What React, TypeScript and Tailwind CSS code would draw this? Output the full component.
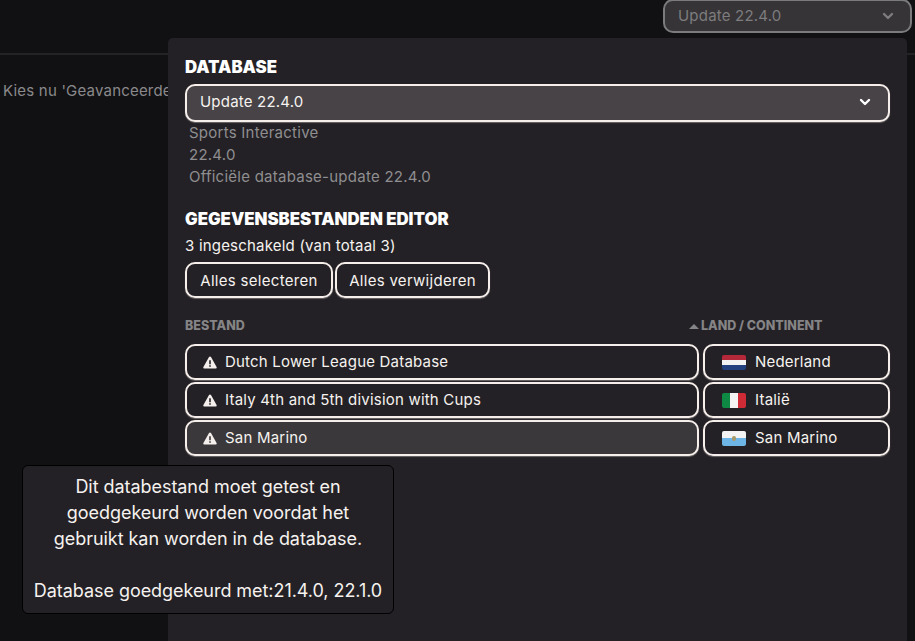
import React from 'react';

const font = { fontFamily: 'Inter, "Noto Sans", sans-serif' };

const Chevron = ({ className }: { className: string }) => (
    <svg className={className} viewBox="0 0 12 8" fill="none" stroke="currentColor" strokeWidth={2.4} strokeLinecap="round" strokeLinejoin="round">
        <path d="M2 2l4 4 4-4" />
    </svg>
);

const Warning = () => (
    <svg className="w-[14px] h-[13px] shrink-0" viewBox="0 0 14 13">
        <path fillRule="evenodd" fill="#f4efec" d="M7 0.5c.4 0 .8.2 1 .6l5.6 9.8c.4.7-.1 1.6-1 1.6H1.400c-.9 0-1.400-.9-1-1.600L6 1.100c.2-.4.6-.6 1-.6zM6.200 4.200v4h1.600v-4zM6.200 9.200v1.600h1.600V9.200z" />
    </svg>
);

const FlagNL = () => (
    <div className="w-[24px] h-[15px] rounded-[2px] overflow-hidden flex flex-col shrink-0">
        <div className="flex-1 bg-[#b5283a]" />
        <div className="flex-1 bg-[#f3f3f3]" />
        <div className="flex-1 bg-[#23407f]" />
    </div>
);

const FlagIT = () => (
    <div className="w-[24px] h-[15px] rounded-[2px] overflow-hidden flex shrink-0">
        <div className="flex-1 bg-[#0f8a45]" />
        <div className="flex-1 bg-[#f3f3f3]" />
        <div className="flex-1 bg-[#cf2b37]" />
    </div>
);

const FlagSM = () => (
    <div className="relative w-[24px] h-[15px] rounded-[2px] overflow-hidden flex flex-col shrink-0">
        <div className="flex-1 bg-[#f3f3f3]" />
        <div className="flex-1 bg-[#6db5e6]" />
        <div className="absolute left-[10px] top-[5px] w-[4px] h-[5px] rounded-full bg-[#a89a6a]" />
    </div>
);

const rows = [
    { file: 'Dutch Lower League Database', country: 'Nederland', flag: <FlagNL /> },
    { file: 'Italy 4th and 5th division with Cups', country: 'Italië', flag: <FlagIT /> },
    { file: 'San Marino', country: 'San Marino', flag: <FlagSM />, hover: true },
];

export default function App() {
    return (
        <div className="relative w-[915px] h-[641px] overflow-hidden bg-[#111113] text-[15px] tracking-[0.2px]" style={font}>
            {/* Background page */}
            <div className="h-[55px] border-b-2 border-[#232225] flex justify-end pr-[3px]">
                <div className="w-[249px] h-[34px] -mt-[1px] pl-[13px] pr-[14px] flex items-center justify-between rounded-[10px] border-2 border-[#7b7a7c] bg-[#363437] text-[#7d7c7e]">
                    <span>Update 22.4.0</span>
                    <Chevron className="w-[12px] h-[8px] mr-[2px]" />
                </div>
            </div>
            <div className="pl-[3px] pt-[25px] text-[#8a898b]">Kies nu 'Geavanceerde</div>

            {/* Popover */}
            <div className="absolute left-[168px] top-[38px] right-[8px] bottom-0 rounded-t-[5px] bg-[#232125] pl-[17px] pr-[17px] pt-[19px]">
                <h2 className="text-[16.8px] leading-[20px] font-black text-white tracking-normal">DATABASE</h2>
                <div className="mt-[7px] h-[38px] flex items-center justify-between pb-[2px] pl-[13px] pr-[17px] rounded-[10px] border-2 border-[#f6eeea] bg-[#474347] text-[#f6f2ef] shadow-[0_1px_1px_rgba(246,238,234,0.35)]">
                    <span>Update 22.4.0</span>
                    <Chevron className="w-[12px] h-[8px] text-white" />
                </div>
                <div className="pl-[4px] text-[#8f8e90] leading-[22px] tracking-[0.25px]">
                    <div>Sports Interactive</div>
                    <div>22.4.0</div>
                    <div>Officiële database-update 22.4.0</div>
                </div>

                <h2 className="mt-[21px] text-[16.8px] leading-[20px] font-black text-white tracking-normal">GEGEVENSBESTANDEN EDITOR</h2>
                <div className="mt-[7px] leading-[20px] text-[#f6f2ef]">3 ingeschakeld (van totaal 3)</div>
                <div className="mt-[6px] flex gap-[2px]">
                    <button className="h-[36px] w-[148px] pt-[2px] tracking-[0.3px] rounded-[10px] border-2 border-[#f6eeea] text-[#f6f2ef] shadow-[0_1px_1px_rgba(246,238,234,0.35)]">Alles selecteren</button>
                    <button className="h-[36px] w-[155px] pt-[2px] tracking-[0.3px] rounded-[10px] border-2 border-[#f6eeea] text-[#f6f2ef] shadow-[0_1px_1px_rgba(246,238,234,0.35)]">Alles verwijderen</button>
                </div>

                <div className="mt-[20px] flex items-center h-[16px] text-[12.5px] font-extrabold text-[#858486] tracking-normal">
                    <div className="w-[504px]">BESTAND</div>
                    <div className="flex items-center gap-[2px]">
                        <div className="w-0 h-0 border-x-[5px] border-x-transparent border-b-[5px] border-b-[#858486]" />
                        <span>LAND / CONTINENT</span>
                    </div>
                </div>

                <div className="mt-[10px] flex flex-col gap-[2px]">
                    {rows.map(row => (
                        <div key={row.file} className="flex gap-[4px] h-[36px]">
                            <div className={`w-[514px] flex items-center gap-[8px] pl-[16px] rounded-[10px] border-2 border-[#f6eeea] text-[#f6f2ef] shadow-[0_1px_1px_rgba(246,238,234,0.35)] ${row.hover ? 'bg-[#3a383a]' : ''}`}>
                                <Warning />
                                <span>{row.file}</span>
                            </div>
                            <div className="w-[187px] flex items-center gap-[9px] pl-[17px] rounded-[10px] border-2 border-[#f6eeea] text-[#f6f2ef] shadow-[0_1px_1px_rgba(246,238,234,0.35)]">
                                {row.flag}
                                <span>{row.country}</span>
                            </div>
                        </div>
                    ))}
                </div>
            </div>

            {/* Tooltip */}
            <div className="absolute left-[22px] top-[465px] w-[372px] h-[149px] rounded-[6px] border border-black bg-[#232125] pt-[8px] text-center text-[18px] leading-[26px] tracking-[-0.05px] text-[#f6f2ef]">
                <div>Dit databestand moet getest en</div>
                <div>goedgekeurd worden voordat het</div>
                <div>gebruikt kan worden in de database.</div>
                <div className="mt-[26px]">Database goedgekeurd met:21.4.0, 22.1.0</div>
            </div>
        </div>
    );
}
